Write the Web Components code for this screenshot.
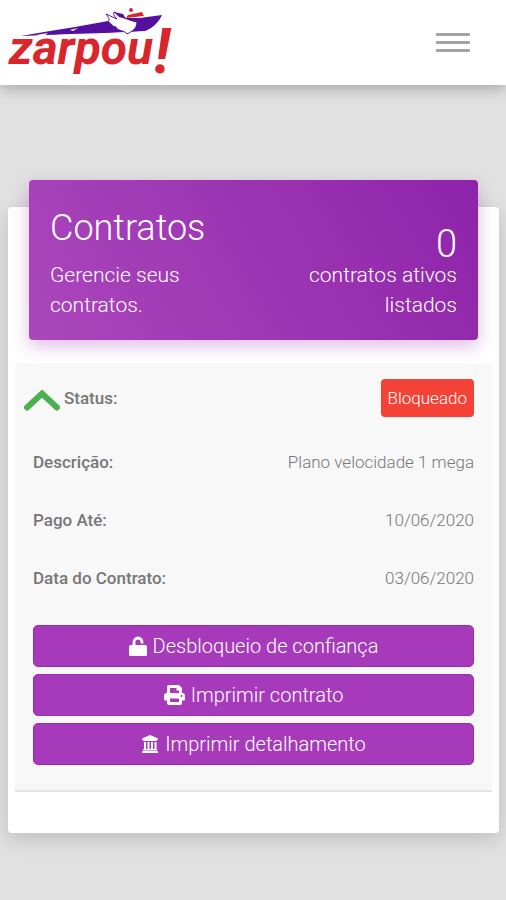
<!DOCTYPE html>
<html lang="pt-BR">
<head>
<meta charset="utf-8">
<meta name="viewport" content="width=device-width, initial-scale=1">
<title>Contratos - Zarpou!</title>
<style>
  body {
    margin: 0;
    min-height: 100vh;
    background: #e1e1e1;
    font-family: Roboto, "Liberation Sans", sans-serif;
    font-weight: 300;
  }
  main {
    padding: 95px 7px 40px 8px;
  }
</style>
</head>
<body>
  <app-header></app-header>
  <main>
    <contracts-card>
      <card-banner slot="banner">
        <span slot="title">Contratos</span>
        <span slot="subtitle">Gerencie seus contratos.</span>
        <span slot="count">0</span>
        <span slot="count-label">contratos ativos listados</span>
      </card-banner>
      <contract-row toggle>
        <span slot="label">Status:</span>
        <status-badge>Bloqueado</status-badge>
      </contract-row>
      <contract-row>
        <span slot="label">Descrição:</span>
        Plano velocidade 1 mega
      </contract-row>
      <contract-row>
        <span slot="label">Pago Até:</span>
        10/06/2020
      </contract-row>
      <contract-row>
        <span slot="label">Data do Contrato:</span>
        03/06/2020
      </contract-row>
      <action-button slot="actions" icon="unlock">Desbloqueio de confiança</action-button>
      <action-button slot="actions" icon="print">Imprimir contrato</action-button>
      <action-button slot="actions" icon="bank">Imprimir detalhamento</action-button>
    </contracts-card>
  </main>

<script>
const ICONS = {
    unlock: `<svg width="18" height="20" viewBox="0 0 18 20" aria-hidden="true">
      <path d="M5 10V6a4 4 0 0 1 8 0v1.500" fill="none" stroke="currentColor" stroke-width="2.8"/>
      <rect x="0" y="9" width="18" height="11" rx="1.6" fill="currentColor"/>
    </svg>`,
    print: `<svg width="21" height="20" viewBox="0 0 21 20" aria-hidden="true">
      <path fill="currentColor" fill-rule="evenodd" d="M5 0h10l3 3v5c2 0 3 1 3 3v3c0 1-.5 1.500-1.500 1.500H18V18c0 1.300-.7 2-2 2H5c-1.300 0-2-.7-2-2v-2.500H1.500C.5 15.500 0 15 0 14v-3c0-2 1-3 3-3V2c0-1.300.7-2 2-2zM6 3v5h9V5.500h-2.500V3zM6 13.500V17h9v-3.500zM17.500 10a1 1 0 1 0 0 2 1 1 0 0 0 0-2z"/>
    </svg>`,
    bank: `<svg width="18" height="18" viewBox="0 0 18 18" aria-hidden="true">
      <path fill="currentColor" d="M9 0l8 3.500V5h-1v1H2V5H1V3.500zM3 7h2v7H3zM6.500 7h2v7h-2zM10 7h2v7h-2zM13.500 7h2v7h-2zM2 14h14v1.500H2zM1 16h16v2H1z"/>
    </svg>`
};

class AppHeader extends HTMLElement {
    constructor() {
        super();
        this.attachShadow({ mode: 'open' });
    }

    connectedCallback() {
        this.shadowRoot.innerHTML = `
      <style>
        :host {
          display: block;
          position: relative;
        }
        header {
          display: flex;
          align-items: center;
          justify-content: space-between;
          height: 85px;
          padding: 0 36px 0 4px;
          box-sizing: border-box;
          background: #fff;
          box-shadow: 0 4px 14px rgba(0, 0, 0, 0.25);
        }
        .logo, .logo svg {
          display: block;
          overflow: visible;
        }
        .logo text {
          font-family: Roboto, "Liberation Sans", sans-serif;
          font-weight: 700;
          font-style: italic;
          fill: #d8262c;
        }
        .menu {
          display: flex;
          flex-direction: column;
          gap: 5px;
          padding: 0;
          border: none;
          background: none;
          cursor: pointer;
        }
        .menu span {
          width: 34px;
          height: 3px;
          background: #a3a3a3;
          border-radius: 1px;
        }
      </style>
      <header>
        <a class="logo" href="#" aria-label="zarpou!">
          <svg width="180" height="85" viewBox="4 0 180 85">
            <path fill="#54109f" d="M21 36L50 31 75 27 108 21 122 18 140 18 162 15C159 22 153 28 145 31 115 33 65 34 21 36z"/>
            <path fill="#fff" d="M36 35l12-2-4 3zM70 30l8-2-5 3z"/>
            <path fill="#fff" stroke="#54109f" stroke-width="1" d="M106 14C111 16 114 18 117 19 114 16 113 14 114 12 120 15 126 20 137 22 137 28 133 31 127 34 124 30 117 31 116 27 111 26 113 24 108 22 110 20 109 18 106 14z"/>
            <path fill="#54109f" d="M114 12l9 2 3 5-7-2z"/>
            <path fill="#d8262c" d="M126 18L128 15 142 12 144 16z"/>
            <circle cx="131" cy="10" r="2" fill="#d8262c"/>
            <text x="9" y="64" font-size="48">zarpou</text>
            <text x="154" y="73" font-size="62">!</text>
          </svg>
        </a>
        <button class="menu" type="button" aria-label="Menu">
          <span></span><span></span><span></span>
        </button>
      </header>
    `;
    }
}

class ContractsCard extends HTMLElement {
    constructor() {
        super();
        this.attachShadow({ mode: 'open' });
    }

    connectedCallback() {
        this.shadowRoot.innerHTML = `
      <style>
        :host {
          display: block;
        }
        .card {
          display: flow-root;
          margin-top: 27px;
          padding: 0 7px 41px;
          background: #fff;
          border-radius: 4px;
          box-shadow: 0 6px 20px rgba(0, 0, 0, 0.16);
        }
        .banner {
          display: block;
          margin: -27px 14px 23px;
        }
        .panel {
          padding: 6px 18px 25px;
          background: #f8f8f8;
          border-bottom: 2px solid #e4e4e4;
        }
        .actions {
          display: flex;
          flex-direction: column;
          gap: 7px;
          padding-top: 18px;
        }
      </style>
      <div class="card">
        <slot class="banner" name="banner"></slot>
        <section class="panel">
          <slot></slot>
          <div class="actions"><slot name="actions"></slot></div>
        </section>
      </div>
    `;
    }
}

class CardBanner extends HTMLElement {
    constructor() {
        super();
        this.attachShadow({ mode: 'open' });
    }

    connectedCallback() {
        this.shadowRoot.innerHTML = `
      <style>
        :host {
          display: flex;
          justify-content: space-between;
          padding: 24px 21px 20px;
          color: #fff;
          background: linear-gradient(60deg, #ab47bc, #8e24aa);
          border-radius: 4px;
          box-shadow: 0 6px 18px rgba(142, 36, 170, 0.3);
        }
        .left, .right {
          width: 40%;
        }
        .right {
          padding-top: 24px;
          text-align: right;
        }
        h1, p {
          margin: 0;
          font-weight: inherit;
        }
        h1 {
          font-size: 36px;
          line-height: 48px;
          margin-bottom: 8px;
        }
        .count {
          font-size: 38px;
          line-height: 32px;
        }
        .text {
          font-size: 21px;
          line-height: 30px;
        }
      </style>
      <div class="left">
        <h1><slot name="title"></slot></h1>
        <p class="text"><slot name="subtitle"></slot></p>
      </div>
      <div class="right">
        <p class="count"><slot name="count"></slot></p>
        <p class="text"><slot name="count-label"></slot></p>
      </div>
    `;
    }
}

class ContractRow extends HTMLElement {
    constructor() {
        super();
        this.attachShadow({ mode: 'open' });
    }

    connectedCallback() {
        const toggle = this.hasAttribute('toggle') ? `
        <button type="button" aria-label="Recolher contrato" aria-expanded="true">
          <svg width="36" height="24" viewBox="0 0 36 24" aria-hidden="true">
            <path d="M3 19.500L18 5.500l15 14" fill="none" stroke="#4caf50" stroke-width="6" stroke-linecap="round"/>
          </svg>
        </button>` : '';

        this.shadowRoot.innerHTML = `
      <style>
        :host {
          display: flex;
          align-items: center;
          justify-content: space-between;
          min-height: 58px;
          box-sizing: border-box;
          font-size: 17px;
          line-height: 24px;
          color: #777;
        }
        :host([toggle]) {
          min-height: 64px;
          padding-bottom: 6px;
        }
        .label {
          display: flex;
          align-items: center;
          gap: 4px;
          font-weight: 500;
        }
        button {
          display: flex;
          margin-left: -9px;
          padding: 4px 0 0;
          border: none;
          background: none;
          cursor: pointer;
        }
      </style>
      <div class="label">${toggle}<slot name="label"></slot></div>
      <div class="value"><slot></slot></div>
    `;
    }
}

class StatusBadge extends HTMLElement {
    constructor() {
        super();
        this.attachShadow({ mode: 'open' });
    }

    connectedCallback() {
        this.shadowRoot.innerHTML = `
      <style>
        :host {
          display: block;
          padding: 7px;
          font-size: 17px;
          line-height: 24px;
          color: #fff;
          background: #f44336;
          border-radius: 4px;
        }
      </style>
      <slot></slot>
    `;
    }
}

class ActionButton extends HTMLElement {
    constructor() {
        super();
        this.attachShadow({ mode: 'open' });
    }

    connectedCallback() {
        this.shadowRoot.innerHTML = `
      <style>
        :host {
          display: block;
        }
        button {
          display: flex;
          align-items: center;
          justify-content: center;
          gap: 6px;
          width: 100%;
          height: 42px;
          padding: 0 8px;
          font: inherit;
          font-size: 20px;
          color: #fff;
          background: #a63aba;
          border: 1px solid #9c2bb0;
          border-radius: 5px;
          cursor: pointer;
        }
      </style>
      <button type="button">${ICONS[this.getAttribute('icon')]}<span><slot></slot></span></button>
    `;
    }
}

customElements.define('app-header', AppHeader);
customElements.define('contracts-card', ContractsCard);
customElements.define('card-banner', CardBanner);
customElements.define('contract-row', ContractRow);
customElements.define('status-badge', StatusBadge);
customElements.define('action-button', ActionButton);
</script>
</body>
</html>
